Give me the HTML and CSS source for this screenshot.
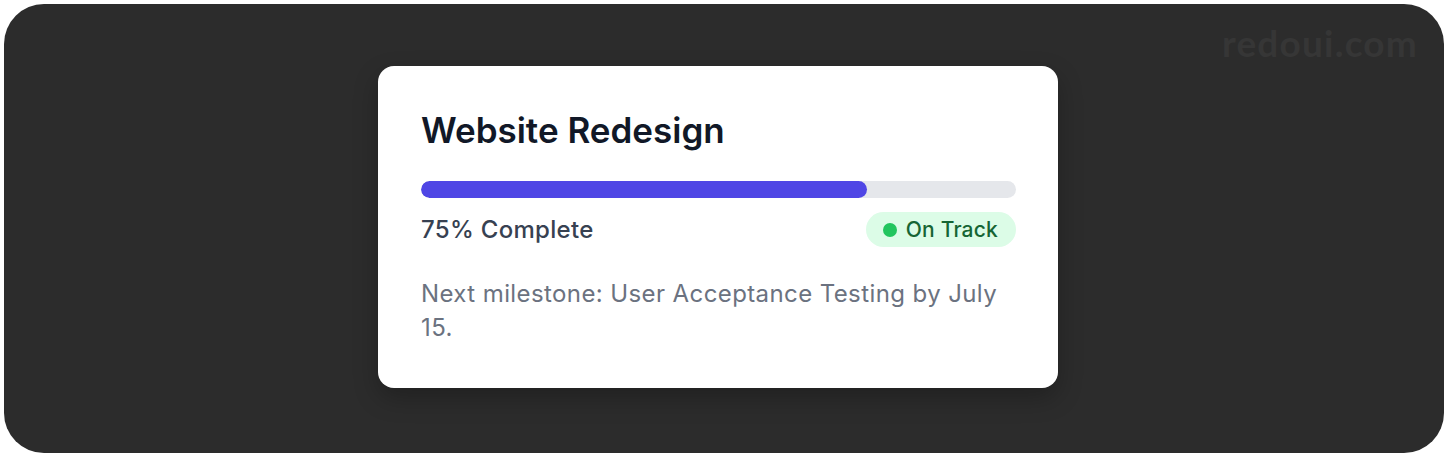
FILE: index.html
```html
<!DOCTYPE html>
<html lang="en">
<head>
<meta charset="utf-8">
<title>Website Redesign</title>
<link rel="stylesheet" href="styles.css">
</head>
<body>
<div class="stage">
  <div class="watermark">redoui.com</div>
  <div class="card">
    <h2 class="title">Website Redesign</h2>
    <div class="track"><div class="fill" style="width:75%"></div></div>
    <div class="status-row">
      <span class="percent">75% Complete</span>
      <span class="badge"><span class="dot"></span>On Track</span>
    </div>
    <p class="note">Next milestone: User Acceptance Testing by July 15.</p>
  </div>
</div>
</body>
</html>
```
FILE: styles.css
```css
* { box-sizing: border-box; }
html, body { margin: 0; padding: 0; background: #ffffff; }
body { font-family: Inter, "Noto Sans", sans-serif; }
.stage {
  position: relative;
  margin: 4px;
  width: 1440px;
  height: 449px;
  background: #2c2c2c;
  border-radius: 40px;
  padding: 62px 0 0 374px;
  overflow: hidden;
}
.watermark {
  position: absolute;
  top: 16px;
  right: 26px;
  font-family: Lato, Inter, sans-serif;
  font-weight: 700;
  font-size: 37px;
  letter-spacing: 1.2px;
  color: #363636;
}
.card {
  width: 680px;
  height: 322px;
  background: #ffffff;
  border-radius: 16px;
  padding: 41px 42px 0 43px;
  box-shadow: 0 10px 25px rgba(0,0,0,0.25);
}
.title {
  margin: 0;
  font-size: 35px;
  line-height: 46px;
  font-weight: 600;
  color: #111827;
}
.track {
  margin-top: 28px;
  height: 17px;
  border-radius: 9px;
  background: #e5e7eb;
  overflow: hidden;
}
.fill {
  height: 100%;
  background: #4f46e5;
  border-radius: 9px;
}
.status-row {
  margin-top: 14px;
  display: flex;
  justify-content: space-between;
  align-items: center;
}
.percent {
  font-size: 24px;
  font-weight: 500;
  letter-spacing: 0.3px;
  color: #374151;
}
.badge {
  display: inline-flex;
  align-items: center;
  gap: 9px;
  height: 35px;
  padding: 0 18px 0 17px;
  border-radius: 18px;
  background: #dcfce7;
  color: #166534;
  font-size: 21px;
  font-weight: 500;
  letter-spacing: 0.2px;
}
.dot {
  width: 14px;
  height: 14px;
  border-radius: 50%;
  background: #22c55e;
}
.note {
  margin: 30px 0 0;
  font-size: 24px;
  line-height: 34px;
  letter-spacing: 0.4px;
  color: #6b7280;
}
```
